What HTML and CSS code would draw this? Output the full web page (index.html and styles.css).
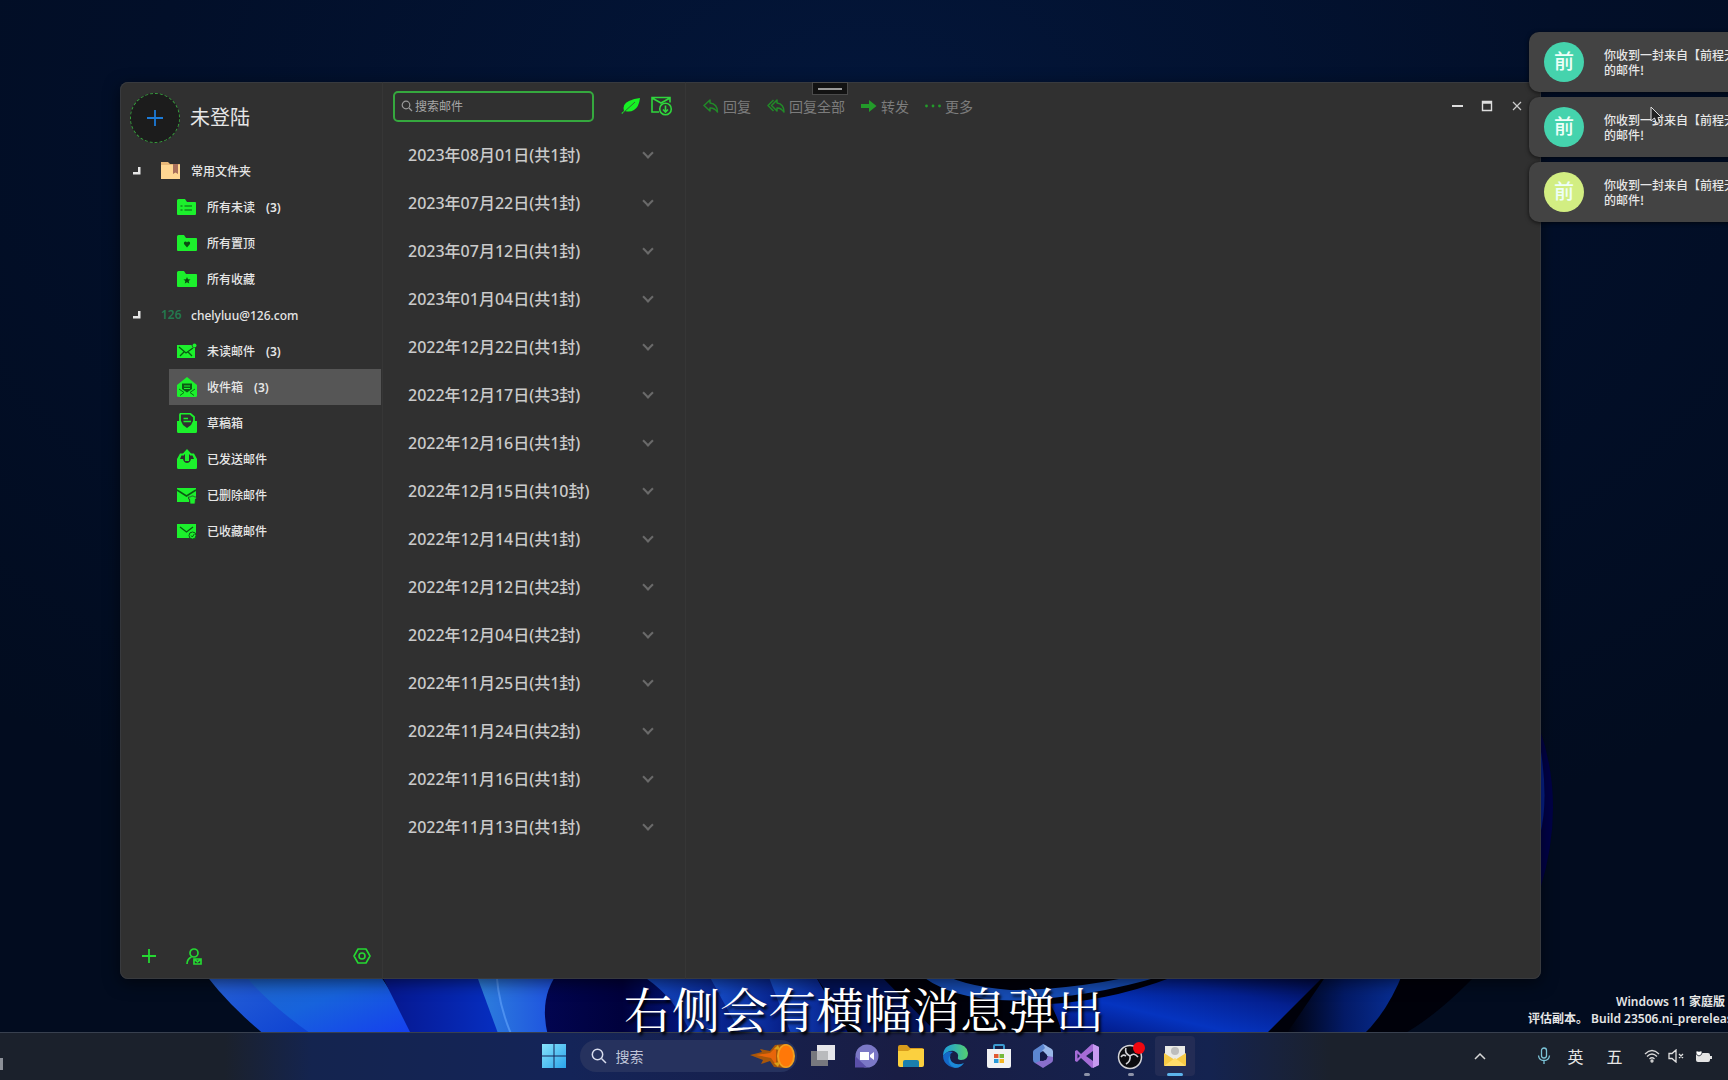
FILE: index.html
```html
<!DOCTYPE html>
<html lang="zh-CN">
<head>
<meta charset="utf-8">
<meta name="viewport" content="width=device-width, initial-scale=1">
<title>邮件</title>
<link rel="stylesheet" href="styles.css">
</head>
<body>
<div class="desktop">
  <svg class="wallpaper" viewBox="0 0 1728 1080" preserveAspectRatio="none" aria-hidden="true">
    <defs>
      <radialGradient id="sky" cx="50%" cy="10%" r="75%"><stop offset="0" stop-color="#03163a"/><stop offset=".55" stop-color="#020f29"/><stop offset="1" stop-color="#020c1f"/></radialGradient>
      <linearGradient id="g1" x1="0" y1="0" x2="1" y2="1"><stop offset="0" stop-color="#2c6ad8"/><stop offset="1" stop-color="#0c3fd2"/></linearGradient>
      <linearGradient id="g2" x1="0" y1="0" x2="1" y2="1"><stop offset="0" stop-color="#2366c4"/><stop offset=".5" stop-color="#1763dc"/><stop offset="1" stop-color="#153cf0"/></linearGradient>
      <linearGradient id="g3"><stop offset="0" stop-color="#06158a"/><stop offset="1" stop-color="#0630c4"/></linearGradient>
      <linearGradient id="g4"><stop offset="0" stop-color="#2f83dc"/><stop offset="1" stop-color="#1b49e0"/></linearGradient>
      <linearGradient id="g5"><stop offset="0" stop-color="#020550"/><stop offset=".5" stop-color="#00013c"/><stop offset="1" stop-color="#031a8a"/></linearGradient>
      <linearGradient id="g6"><stop offset="0" stop-color="#1752d0"/><stop offset="1" stop-color="#031478"/></linearGradient>
      <linearGradient id="g7" x1="0" y1="1" x2="1" y2="0"><stop offset="0" stop-color="#021070"/><stop offset=".35" stop-color="#0534c0"/><stop offset=".65" stop-color="#042090"/><stop offset="1" stop-color="#01042c"/></linearGradient>
      <linearGradient id="g8"><stop offset="0" stop-color="#000108"/><stop offset=".5" stop-color="#031a66"/><stop offset="1" stop-color="#08309a"/></linearGradient>
    </defs>
    <rect width="1728" height="1080" fill="url(#sky)"/>
    <path d="M195 960 Q222 1000 266 1036 H1400 Q1440 1015 1490 960Z" fill="#00010a"/>
    <path d="M195 960 Q222 1000 266 1036 H320 L240 960Z" fill="url(#g1)"/>
    <path d="M232 960 Q262 1000 314 1036 H420 L370 960Z" fill="url(#g2)"/>
    <path d="M374 960 L412 1036 H505 L470 960Z" fill="url(#g3)"/>
    <path d="M471 960 L499 1036 H570 V960Z" fill="url(#g4)"/>
    <path d="M496 960 Q496 1000 512 1036" fill="none" stroke="#4c90f0" stroke-width="2"/>
    <path d="M560 970 Q538 996 548 1036 H700 L660 970Z" fill="url(#g5)"/>
    <path d="M632 970 Q672 990 692 1036 H755 L725 970Z" fill="url(#g6)"/>
    <path d="M706 970 L742 1036 H800 L765 970Z" fill="url(#g6)"/>
    <path d="M766 970 L792 1036 H850 L812 970Z" fill="url(#g6)"/>
    <path d="M812 970 Q832 1005 868 1036 H940 L875 970Z" fill="#031358"/>
    <path d="M915 970 Q950 1004 1030 1000 Q1110 994 1180 970 H1160 Q1080 990 1010 990 Q960 986 935 970Z" fill="#164cb4"/>
    <path d="M1190 970 Q1120 1000 1050 1004 Q1060 1020 1062 1036 H1264 L1330 970Z" fill="url(#g7)"/>
    <path d="M1330 970 L1285 1036 H1362 Q1388 1012 1404 970Z" fill="url(#g8)"/>
    <path d="M1540 730 Q1566 805 1540 890Z" fill="#000247"/>
    <path d="M1540 745 Q1549 800 1540 835Z" fill="#06208a"/>
  </svg>

  <main class="window">
    <nav class="sidebar" aria-label="文件夹">
      <header class="account">
        <button class="avatar-add" aria-label="登陆"><svg viewBox="0 0 16 16" width="16" height="16"><path d="M8 0v16M0 8h16" stroke="#1c7bd8" stroke-width="1.8"/></svg></button>
        <h1>未登陆</h1>
      </header>
      <ul class="tree">
        <li><a class="group" href="#"><svg class="twisty" viewBox="0 0 8 8"><path d="M7.500 0v7.500H0V5h5V0z" fill="#e6e6e6"/></svg>
          <svg class="icon" viewBox="0 0 20 20"><path d="M0 1h7l2 2h10v15H0z" fill="#e8b878"/><path d="M0 4h19v14H0z" fill="#ffd793"/><path d="M12 3h5v10l-2.500-1.500L12 13z" fill="#a9705c"/></svg><span>常用文件夹</span></a>
          <ul>
            <li><a class="item" href="#"><svg class="icon" viewBox="0 0 20 20"><path d="M0 3.500Q0 2 1.500 2H8l2 3h8.500Q19 5 19 6.500V17q0 1-1 1H1q-1 0-1-1z" fill="#1cf02c"/><path d="M3.500 9h2M7.500 9H15M3.500 13h2M7.500 13H15" stroke="#128a1c" stroke-width="1.400"/></svg><span>所有未读</span><b>(3)</b></a></li>
            <li><a class="item" href="#"><svg class="icon" viewBox="0 0 20 20"><path d="M0 3.500Q0 2 1.500 2H7l2 3h10.500Q20 5 20 6.500V17q0 1-1 1H1q-1 0-1-1z" fill="#1cf02c"/><path d="M10 14.500 7 11q-.5-2.500 1.500-2.500 1 0 1.500 1 .5-1 1.500-1 2 0 1.500 2.500z" fill="#0c4c12"/></svg><span>所有置顶</span></a></li>
            <li><a class="item" href="#"><svg class="icon" viewBox="0 0 20 20"><path d="M0 3.500Q0 2 1.500 2H7l2 3h10.500Q20 5 20 6.500V17q0 1-1 1H1q-1 0-1-1z" fill="#1cf02c"/><path d="m10 8 1 2.200 2.500.3-1.800 1.600.5 2.400L10 13.300l-2.200 1.200.5-2.400-1.800-1.600 2.500-.3z" fill="#0c4c12"/></svg><span>所有收藏</span></a></li>
          </ul>
        </li>
        <li><a class="group" href="#"><svg class="twisty" viewBox="0 0 8 8"><path d="M7.500 0v7.500H0V5h5V0z" fill="#e6e6e6"/></svg><span class="brand">126</span><span>chelyluu@126.com</span></a>
          <ul>
            <li><a class="item" href="#"><svg class="icon" viewBox="0 0 20 20"><path d="M0 4h14.500q.5 3 3.500 3v10H0z" fill="#1cf02c"/><path d="m2 6 7 6 7-5M3 15l4-4m8 4-4-4" fill="none" stroke="#0b5a14" stroke-width="1.300"/><circle cx="17.500" cy="4.500" r="2" fill="#1cf02c"/></svg><span>未读邮件</span><b>(3)</b></a></li>
            <li><a class="item selected" href="#"><svg class="icon" viewBox="0 0 20 20"><path d="M0 8 10 0l10 8v10.500Q20 20 18.500 20h-17Q0 20 0 18.500z" fill="#1cf02c"/><path d="M5 6.500h10V12l-5 3.500L5 12z" fill="#0b5a14"/><path d="M7 9h6M7 11.500h6" stroke="#1cf02c"/><path d="m2 12 5 3.500-4 3M18 12l-5 3.500 4 3" fill="none" stroke="#0b6a16"/></svg><span>收件箱</span><b>(3)</b></a></li>
            <li><a class="item" href="#"><svg class="icon" viewBox="0 0 20 20"><path d="M3 9V2q0-1.500 1.500-1.500H13L17 4v5" fill="none" stroke="#1cf02c" stroke-width="1.800"/><path d="M0 8h4l2 4 4 3 4-3 2-4h4v10.500q0 1.500-1.500 1.500h-17Q0 20 0 18.500z" fill="#1cf02c"/><path d="M6.500 5.500H11M6.500 8.500H14" stroke="#1cf02c" stroke-width="1.400"/></svg><span>草稿箱</span></a></li>
            <li><a class="item" href="#"><svg class="icon" viewBox="0 0 20 20"><path d="M0 10 3 4.500h4v2H4.500L3 10h3q1 4 4 4t4-4h3l-1.500-3.500H13v-2h4l3 5.500v8.500q0 1.500-1.500 1.500h-17Q0 20 0 18.500z" fill="#1cf02c"/><path d="m10 0 5 5.500h-3V12H8V5.500H5z" fill="#1cf02c"/></svg><span>已发送邮件</span></a></li>
            <li><a class="item" href="#"><svg class="icon" viewBox="0 0 20 20"><path d="M0 3h19v9H13l-1 5H0z" fill="#1cf02c"/><path d="m0 5 9.500 6L19 5" fill="none" stroke="#0b5a14" stroke-width="1.500"/><path d="M11.500 12h2l1-1h2l1 1h2v2h-1l-.5 5h-5l-.5-5h-1z" fill="#1cf02c" stroke="#303030" stroke-width=".8"/></svg><span>已删除邮件</span></a></li>
            <li><a class="item" href="#"><svg class="icon" viewBox="0 0 20 20"><path d="M0 3h19v9l-5 5H0z" fill="#1cf02c"/><path d="m3 6 6.500 5L16 6" fill="none" stroke="#0b5a14" stroke-width="1.300"/><circle cx="15.500" cy="14.500" r="3.500" fill="#1cf02c" stroke="#0b5a14"/><path d="m14 14.500 1.300 1.500 2-3" fill="none" stroke="#0b5a14"/></svg><span>已收藏邮件</span></a></li>
          </ul>
        </li>
      </ul>
      <footer class="side-tools">
        <button aria-label="添加"><svg viewBox="0 0 16 16" width="16" height="16"><path d="M8 1v14M1 8h14" stroke="#25d832" stroke-width="1.800"/></svg></button>
        <button aria-label="联系人"><svg viewBox="0 0 16 17" width="16" height="17" fill="none" stroke="#25d832" stroke-width="1.700"><circle cx="8" cy="5" r="4"/><path d="M1 16q0-5 4.500-7"/><path d="M8 11h7v5H8zl3.500 3L15 11"/></svg></button>
        <button class="push" aria-label="设置"><svg viewBox="0 0 18 18" width="18" height="18" fill="none" stroke="#25d832" stroke-width="1.600"><path d="M5 2h8l4 7-4 7H5L1 9z" stroke-linejoin="round"/><circle cx="9" cy="9" r="3"/></svg></button>
      </footer>
    </nav>

    <section class="list-pane" aria-label="邮件列表">
      <div class="list-head">
        <label class="search"><svg viewBox="0 0 12 12" width="12" height="12" fill="none" stroke="#9a9a9a" stroke-width="1.200"><circle cx="5" cy="5" r="3.800"/><path d="m8 8 3 3"/></svg><input type="search" placeholder="搜索邮件" aria-label="搜索邮件"></label>
        <button aria-label="写邮件"><svg viewBox="0 0 20 18" width="20" height="18"><path d="M3 14Q1 7 8 4q5-2.500 11-3-1 9-6 12-4 2.500-9 1l-3 3-.5-1z" fill="#16f024"/><path d="M2 16 14 5" stroke="#2f6b33"/></svg></button>
        <button aria-label="接收邮件"><svg viewBox="0 0 22 20" width="22" height="20" fill="none" stroke="#2fd63c" stroke-width="1.600"><path d="M8 16H1V1.500h18v5M1 2l9 5 9-5"/><circle cx="14.500" cy="13" r="5.800"/><path d="M14.500 9.500v6.500m-2.500-2.500 2.500 2.500 2.500-2.500"/></svg></button>
      </div>
      <ul class="dates">
        <li><button>2023年08月01日(共1封)<i class="chevron"></i></button></li>
        <li><button>2023年07月22日(共1封)<i class="chevron"></i></button></li>
        <li><button>2023年07月12日(共1封)<i class="chevron"></i></button></li>
        <li><button>2023年01月04日(共1封)<i class="chevron"></i></button></li>
        <li><button>2022年12月22日(共1封)<i class="chevron"></i></button></li>
        <li><button>2022年12月17日(共3封)<i class="chevron"></i></button></li>
        <li><button>2022年12月16日(共1封)<i class="chevron"></i></button></li>
        <li><button>2022年12月15日(共10封)<i class="chevron"></i></button></li>
        <li><button>2022年12月14日(共1封)<i class="chevron"></i></button></li>
        <li><button>2022年12月12日(共2封)<i class="chevron"></i></button></li>
        <li><button>2022年12月04日(共2封)<i class="chevron"></i></button></li>
        <li><button>2022年11月25日(共1封)<i class="chevron"></i></button></li>
        <li><button>2022年11月24日(共2封)<i class="chevron"></i></button></li>
        <li><button>2022年11月16日(共1封)<i class="chevron"></i></button></li>
        <li><button>2022年11月13日(共1封)<i class="chevron"></i></button></li>
      </ul>
    </section>

    <section class="reader" aria-label="邮件内容">
      <div class="toolbar">
        <button><svg viewBox="0 0 16 14" width="16" height="14"><path d="M7 1 1 6.500 7 12V9q4-.5 7.500 4Q14.500 5 7 4z" fill="none" stroke="#218a28" stroke-width="1.500" stroke-linejoin="round"/></svg>回复</button>
        <button><svg viewBox="0 0 18 14" width="18" height="14"><path d="M10 1 4.500 6.500 10 12V9q3.500-.5 7 4Q17 5 10 4zM6.500 1 1 6.500 6.500 12" fill="none" stroke="#218a28" stroke-width="1.500" stroke-linejoin="round"/></svg>回复全部</button>
        <button><svg viewBox="0 0 16 14" width="16" height="14"><path d="M0 5h8V1l7.500 6L8 13V9H0z" fill="#239a2a"/></svg>转发</button>
        <button><svg viewBox="0 0 16 14" width="16" height="14" fill="#239a2a"><circle cx="1.500" cy="7" r="1.400"/><circle cx="8" cy="7" r="1.400"/><circle cx="14.500" cy="7" r="1.400"/></svg>更多</button>
        <div class="window-controls">
          <button aria-label="最小化"><svg viewBox="0 0 12 12" width="12" height="12"><path d="M1 6h11" stroke="#ddd" stroke-width="2"/></svg></button>
          <button aria-label="最大化"><svg viewBox="0 0 12 12" width="12" height="12"><path d="M1.500 1.500h9v9h-9zM1 3h10" fill="none" stroke="#ddd" stroke-width="1.400"/></svg></button>
          <button aria-label="关闭"><svg viewBox="0 0 12 12" width="12" height="12"><path d="m2 2 8 8m0-8-8 8" stroke="#ccc" stroke-width="1.200"/></svg></button>
        </div>
      </div>
    </section>
    <div class="grip"></div>
  </main>

  <aside class="toasts" aria-label="通知">
    <article class="toast"><span class="badge">前</span><p>你收到一封来自【前程无忧】<br>的邮件!</p></article>
    <article class="toast"><span class="badge">前</span><p>你收到一封来自【前程无忧】<br>的邮件!</p></article>
    <article class="toast"><span class="badge lime">前</span><p>你收到一封来自【前程无忧】<br>的邮件!</p></article>
  </aside>

  <div class="watermark"><p class="edition">Windows 11 家庭版</p><p>评估副本。 Build 23506.ni_prerelease</p></div>

  <footer class="taskbar">
    <div class="widgets"></div>
    <div class="apps">
      <button class="app" aria-label="开始"><svg viewBox="0 0 24 24" width="24" height="24"><defs><linearGradient id="win" x1="0" y1="0" x2="1" y2="1"><stop offset="0" stop-color="#86e2fb"/><stop offset="1" stop-color="#2aa4ea"/></linearGradient></defs><path d="M0 0h11.500v11.500H0zM12.500 0H24v11.500H12.500zM0 12.500h11.500V24H0zM12.500 12.500H24V24H12.500z" fill="url(#win)"/></svg></button>
      <label class="task-search"><svg viewBox="0 0 16 16" width="16" height="16" fill="none" stroke="#d8dcec" stroke-width="1.500"><circle cx="6.500" cy="6.500" r="5.200"/><path d="m10.500 10.500 4.500 4.500"/></svg><input type="text" placeholder="搜索" aria-label="搜索">
        <svg viewBox="0 0 46 26" width="46" height="26"><path d="M0 12 12 9l-2-3 10 2 5-6 10-1v24l-11-1-4-6-9 3 2-4z" fill="#a8560a"/><path d="M6 12 20 10l6-6v18l-5-7z" fill="#e8650a"/><path d="m24 6 4-4 2 5M24 20l4 4 2-5" fill="#d8a018"/><ellipse cx="36" cy="13" rx="9" ry="12" fill="#f0a020"/><ellipse cx="36" cy="13" rx="7" ry="10.500" fill="#ff7808"/></svg></label>
      <button class="app" aria-label="任务视图"><svg viewBox="0 0 24 24" width="24" height="24"><path d="M6 1h18v15H6z" fill="#e6e6ea"/><path d="M0 7h17v15H0z" fill="#77787e"/><path d="M6 7h11v9H6z" fill="#b9babd"/></svg></button>
      <button class="app" aria-label="聊天"><svg viewBox="0 0 24 24" width="24" height="24"><circle cx="12" cy="12" r="11.500" fill="#7b78c6"/><path d="M0 12v11.500h12z" fill="#5a4fa8"/><path d="M5 8h9v8H5zM15 11l4-3v8l-4-3z" fill="#fff"/></svg></button>
      <button class="app" aria-label="文件资源管理器"><svg viewBox="0 0 26 24" width="26" height="24"><path d="M0 3q0-2 2-2h7l3 3h12q2 0 2 2v4H0z" fill="#d89b1c"/><path d="M0 7h10l3-2h13v16q0 2-2 2H2q-2 0-2-2z" fill="#fbd03f"/><path d="M5 23v-5q0-2 2-2h12q2 0 2 2v5z" fill="#1b7fae"/></svg></button>
      <button class="app" aria-label="Edge"><svg viewBox="0 0 26 24" width="26" height="24"><defs><linearGradient id="edge"><stop offset="0" stop-color="#1b9be0"/><stop offset="1" stop-color="#54d070"/></linearGradient></defs><path d="M1 12Q1 1 13 0q12 0 13 9 0 7-7 7-4 0-3-3 1-4-4-6Q6 6 1 12z" fill="url(#edge)"/><path d="M1 12Q5 6 11 8q-4 2-3 7 2 7 9 8-5 2-10-1-6-4-6-10z" fill="#1468c8"/><path d="M10 9q-4 4 0 9 5 4 12 1-4 6-10 4.500Q5 20 7 13z" fill="#1c8ad8"/></svg></button>
      <button class="app" aria-label="应用商店"><svg viewBox="0 0 24 24" width="24" height="24"><path d="M7 6V2q0-1 1-1h8q1 0 1 1v4" fill="none" stroke="#3b9bd0" stroke-width="2"/><path d="M0 5h24v17q0 2-2 2H2q-2 0-2-2z" fill="#f1f2f4"/><path d="M7 10h4.500v4H7z" fill="#e05a33"/><path d="M12.500 10H17v4h-4.500z" fill="#76b83b"/><path d="M7 15h4.500v4H7z" fill="#2a9ad8"/><path d="M12.500 15H17v4h-4.500z" fill="#f3b524"/></svg></button>
      <button class="app" aria-label="Microsoft 365"><svg viewBox="0 0 22 24" width="22" height="24"><path d="M2 6 11 0l4 2v5L8 9v10l-5 0q-2-1-2-3V8q0-1 1-2z" fill="#5b86d0"/><path d="m11 0 8 4.500q2 1 2 3V16l-7-5-4-4 3-3z" fill="#9ab8e8"/><path d="M21 13v3q0 2-2 3l-8 5-8-5 5-2 6-1 2-4z" fill="#8a6fcc"/><path d="m8 9 3-2 4 4v3l-4 3-3-1z" fill="#141c48"/></svg></button>
      <button class="app running" aria-label="Visual Studio"><svg viewBox="0 0 24 24" width="24" height="24"><path d="m17 0 7 3v18l-7 3L6 14l-4 4-2-1V7l2-1 4 4zM2.500 9.500v5L5 12zM18 7l-7 5 7 5z" fill="#a56cd6" fill-rule="evenodd"/><path d="m18 0 6 3v18l-6 3z" fill="#c79af0"/></svg></button>
      <button class="app running" aria-label="OBS"><svg viewBox="0 0 28 28" width="28" height="28"><circle cx="13" cy="15" r="11.500" fill="#0b0b0f" stroke="#d4d4d8" stroke-width="1.500"/><path d="M9 6q-2 5 4 8 4-4 8 1M13 14q1 5-4 8M4 15q2-3 5-1" fill="none" stroke="#d4d4d8" stroke-width="1.600"/><circle cx="22" cy="6" r="6" fill="#f00810"/></svg></button>
      <button class="app active" aria-label="邮件"><svg viewBox="0 0 22 22" width="22" height="22"><path d="M1 1h20v14H1z" fill="#e9e9e6"/><circle cx="11" cy="6" r="4" fill="#bdbdbd"/><path d="m0 8 11 7 11-7v12q0 1-1 1H1q-1 0-1-1z" fill="#f6c945"/><path d="m0 21 11-8 11 8z" fill="#ffdc6a"/></svg></button>
    </div>
    <div class="tray">
      <button class="more" aria-label="显示隐藏的图标"><svg viewBox="0 0 12 8" width="12" height="8"><path d="m1 7 5-5 5 5" fill="none" stroke="#d8d8d8" stroke-width="1.500"/></svg></button>
      <button aria-label="麦克风"><svg viewBox="0 0 14 18" width="14" height="18" fill="none" stroke="#7cc4d8" stroke-width="1.300"><rect x="4.500" y="1" width="5" height="10" rx="2.500"/><path d="M1.500 8.500Q2 13.500 7 13.500t5.500-5M7 13.500V17"/></svg></button>
      <button class="ime">英</button>
      <button class="ime">五</button>
      <button aria-label="网络"><svg viewBox="0 0 16 14" width="16" height="14" fill="none" stroke="#d8d8d8" stroke-width="1.300"><path d="M1 5q7-7 14 0M3 7.500q5-5 10 0M5.500 10q2.500-2.500 5 0"/><circle cx="8" cy="12" r="1"/></svg></button>
      <button aria-label="静音"><svg viewBox="0 0 16 14" width="16" height="14" fill="none" stroke="#e0e0e0" stroke-width="1.300"><path d="M1 4.500h3L8 1v12L4 9.500H1zM11 5l4 4m0-4-4 4"/></svg></button>
      <button class="battery" aria-label="电池"><svg viewBox="0 0 18 16" width="18" height="16"><path d="M2 5h12q2 0 2 2v1h2v3h-2v1q0 2-2 2H4q-2 0-2-2z" fill="#e4e4e4"/><path d="M5 0v4M2 3h6v2q0 2-3 3Q2 7 2 5z" fill="#fff" stroke="#1b212c" stroke-width=".8"/></svg></button>
    </div>
  </footer>

  <p class="subtitle">右侧会有横幅消息弹出</p>
  <svg class="pointer" viewBox="0 0 12 18" width="12" height="18" aria-hidden="true"><path d="M1 1v14l3.500-3L6.500 17h3L8 11.500h3.500z" fill="#222" stroke="#ddd"/></svg>
</div>
</body>
</html>
```
FILE: styles.css
```css
* { box-sizing: border-box; }
body, h1, ul, p { margin: 0; padding: 0; }
ul { list-style: none; }
body, button, input { font-family: "Noto Sans", "Noto Sans CJK SC", sans-serif; font-size: 12px; color: #e6e6e6; }
button { background: none; border: 0; padding: 0; display: flex; align-items: center; justify-content: center; }
input { background: none; border: 0; padding: 0; outline: 0; min-width: 0; flex: 1; }
a { color: inherit; text-decoration: none; }
svg { display: block; flex: none; }

.desktop { position: relative; height: 100vh; min-height: 900px; overflow: hidden; background: #020c20; display: flex; flex-direction: column; justify-content: flex-end; }
.wallpaper { position: absolute; inset: 0; width: 100%; height: 100%; }

/* mail window */
.window { position: absolute; inset: 82px 187px 101px 120px; display: grid; grid-template-columns: 263px 303px 1fr; background: #303030; border-radius: 8px; box-shadow: inset 0 0 0 1px #383a3e, 0 4px 16px #0008; }
.sidebar { display: flex; flex-direction: column; border-right: 1px solid #363636; }
.account { display: flex; align-items: center; gap: 10px; padding: 11px 10px 10px; }
.account h1 { font-size: 20px; font-weight: 400; line-height: 28px; }
.avatar-add { width: 50px; height: 50px; border-radius: 50%; background: #1c1c1c; border: 1px dashed #35a33c; }
.group, .item { display: flex; align-items: center; height: 36px; font-weight: 500; }
.group { padding-left: 13px; }
.twisty { width: 8px; height: 8px; margin-right: 20px; }
.icon { width: 20px; height: 20px; margin-right: 10px; }
.brand { width: 20px; margin-right: 10px; color: #23794f; font-size: 12px; font-weight: 600; line-height: 16px; }
.item { margin: 0 1px 0 49px; padding-left: 8px; }
.item b { font-weight: 600; margin-left: 11px; }
.selected { background: #565656; }
.side-tools { display: flex; align-items: center; gap: 29px; margin-top: auto; padding: 14px 11px 14px 21px; }
.side-tools .push { margin-left: auto; }

.list-pane { border-right: 1px solid #363636; }
.list-head { display: flex; align-items: center; height: 48px; padding: 0 14px 0 10px; gap: 10px; }
.search { display: flex; align-items: center; gap: 2px; width: 201px; height: 31px; padding: 0 6px; margin-right: 17px; border: 2px solid #35a83e; border-radius: 5px; }
.search input::placeholder { color: #a6a6a6; opacity: 1; }
.dates button { width: 100%; height: 48px; padding: 0 33px 0 25px; justify-content: space-between; font-size: 16px; font-weight: 500; color: #cacaca; }
.chevron { width: 8px; height: 8px; margin: 0 0 2px; border: solid #6a6a6a; border-width: 0 2px 2px 0; transform: rotate(45deg); }

.toolbar { display: flex; align-items: center; gap: 16px; height: 48px; padding: 0 18px 0 17px; }
.toolbar > button { gap: 4px; font-size: 14px; color: #7c7c7c; }
.window-controls { display: flex; gap: 18px; margin-left: auto; }
.grip { position: absolute; left: 692px; top: 0; width: 36px; height: 13px; background: #121212; border: 1px solid #4a4a4a; display: flex; align-items: center; justify-content: center; }
.grip::after { content: ""; width: 24px; height: 2px; background: #999; }

/* notifications run past the right edge */
.toasts { position: absolute; top: 32px; right: -101px; width: 300px; display: flex; flex-direction: column; gap: 5px; }
.toast { display: flex; align-items: center; gap: 20px; height: 60px; padding-left: 15px; background: #434343; border-radius: 10px; box-shadow: 0 1px 4px #000a; }
.badge { flex: none; width: 40px; height: 40px; border-radius: 50%; background: #45d3ad; color: #eefff8; font-size: 20px; font-weight: 500; line-height: 40px; text-align: center; }
.badge.lime { background: #d2ee82; }
.toast p { white-space: nowrap; line-height: 15px; font-weight: 500; font-family: "Noto Sans CJK SC", sans-serif; }

.watermark { position: absolute; right: 0; bottom: 53px; width: 200px; line-height: 17px; font-weight: 600; white-space: nowrap; }
.edition { text-align: right; padding-right: 3px; }

/* taskbar */
.taskbar { position: relative; display: grid; grid-template-columns: 1fr auto 1fr; align-items: center; height: 48px; padding-bottom: 1px; border-top: 1px solid #38404f; background: linear-gradient(90deg, #1b212c 13%, #14244f 18%, #142458 33%, #191d44 52%, #142350 70%, #1b212c 77%); }
.widgets { width: 3px; height: 12px; margin-top: 16px; background: #8c9098; }
.apps { display: flex; align-items: center; }
.app { position: relative; width: 44px; height: 40px; }
.task-search { display: flex; align-items: center; gap: 9px; width: 217px; height: 32px; margin: 0 4px; padding: 0 1px 0 11px; border-radius: 16px; background: #26325e; }
.task-search input { font-size: 14px; }
.task-search input::placeholder { color: #c0c6d8; opacity: 1; }
.running::after, .active::after { content: ""; position: absolute; bottom: 0; left: 19px; width: 6px; height: 3px; border-radius: 2px; background: #8d93a8; }
.active { width: 40px; margin: 0 2px; background: #232c55; border-radius: 4px; }
.active::after { left: 12px; width: 16px; background: #5cb4ec; }
.tray { display: flex; align-items: center; justify-content: flex-end; padding-right: 11px; }
.tray button { width: 24px; height: 40px; }
.tray .more { width: 32px; margin-right: 36px; }
.tray .ime { width: 39px; font-size: 16px; }
.tray .ime + button:not(.ime) { margin-left: 6px; }
.tray .battery { width: 29px; }

.subtitle { position: absolute; left: 0; right: 0; bottom: 40px; text-align: center; font: 400 48px/64px "Noto Serif CJK SC", "Noto Sans CJK SC", serif; color: #fff; text-shadow: 2px 3px 3px #000; pointer-events: none; }
.pointer { position: absolute; right: 66px; top: 106px; }
```
